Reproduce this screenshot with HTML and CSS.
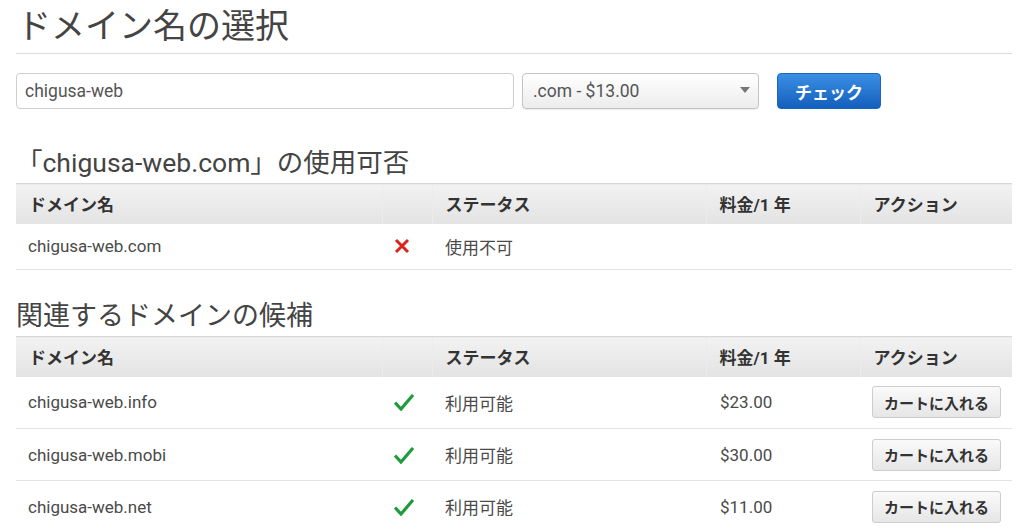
FILE: index.html
```html
<!DOCTYPE html>
<html lang="ja">
<head>
    <meta charset="UTF-8">
    <meta name="viewport" content="width=device-width, initial-scale=1.0">
    <title>ドメイン名の選択</title>
    <link rel="stylesheet" href="styles.css">
</head>
<body>
    <div class="page">
        <h1>ドメイン名の選択</h1>

        <div class="search-row">
            <input class="domain-input" type="text" value="chigusa-web">
            <div class="select-wrap">
                <select class="tld-select">
                    <option>.com - $13.00</option>
                    <option>.net - $11.00</option>
                    <option>.info - $23.00</option>
                </select>
            </div>
            <button class="btn-check">チェック</button>
        </div>

        <h2>「chigusa-web.com」の使用可否</h2>
        <table class="domain-table">
            <thead>
                <tr>
                    <th class="col-name">ドメイン名</th>
                    <th class="col-icon"></th>
                    <th class="col-status">ステータス</th>
                    <th class="col-price">料金/1 年</th>
                    <th class="col-action">アクション</th>
                </tr>
            </thead>
            <tbody>
                <tr class="row-short">
                    <td>chigusa-web.com</td>
                    <td class="icon-cell">
                        <svg width="16" height="16" viewBox="0 0 16 16"><path d="M2 2 L14 14 M14 2 L2 14" stroke="#d9231b" stroke-width="3" stroke-linecap="butt"/></svg>
                    </td>
                    <td>使用不可</td>
                    <td></td>
                    <td></td>
                </tr>
            </tbody>
        </table>

        <h2 class="second">関連するドメインの候補</h2>
        <table class="domain-table">
            <thead>
                <tr>
                    <th class="col-name">ドメイン名</th>
                    <th class="col-icon"></th>
                    <th class="col-status">ステータス</th>
                    <th class="col-price">料金/1 年</th>
                    <th class="col-action">アクション</th>
                </tr>
            </thead>
            <tbody>
                <tr>
                    <td>chigusa-web.info</td>
                    <td class="icon-cell">
                        <svg width="20" height="18" viewBox="0 0 20 18"><path d="M1 9.5 L7 16 L19 2" fill="none" stroke="#1f9a3c" stroke-width="3.2" stroke-linejoin="miter"/></svg>
                    </td>
                    <td>利用可能</td>
                    <td class="price">$23.00</td>
                    <td><button class="btn-cart">カートに入れる</button></td>
                </tr>
                <tr>
                    <td>chigusa-web.mobi</td>
                    <td class="icon-cell">
                        <svg width="20" height="18" viewBox="0 0 20 18"><path d="M1 9.5 L7 16 L19 2" fill="none" stroke="#1f9a3c" stroke-width="3.2" stroke-linejoin="miter"/></svg>
                    </td>
                    <td>利用可能</td>
                    <td class="price">$30.00</td>
                    <td><button class="btn-cart">カートに入れる</button></td>
                </tr>
                <tr>
                    <td>chigusa-web.net</td>
                    <td class="icon-cell">
                        <svg width="20" height="18" viewBox="0 0 20 18"><path d="M1 9.5 L7 16 L19 2" fill="none" stroke="#1f9a3c" stroke-width="3.2" stroke-linejoin="miter"/></svg>
                    </td>
                    <td>利用可能</td>
                    <td class="price">$11.00</td>
                    <td><button class="btn-cart">カートに入れる</button></td>
                </tr>
            </tbody>
        </table>
    </div>
</body>
</html>
```

FILE: styles.css
```css
body {
    margin: 0;
    font-family: Roboto, "Noto Sans CJK JP", sans-serif;
    color: #444;
    background: #fff;
}

.page {
    padding: 0 12px 0 16px;
}

h1 {
    margin: 0;
    padding: 5px 0 6px 1px;
    font-size: 34px;
    line-height: 42px;
    font-weight: 400;
    color: #444;
    border-bottom: 1px solid #dcdcdc;
}

.search-row {
    display: flex;
    align-items: center;
    margin-top: 19px;
}

.domain-input {
    box-sizing: border-box;
    width: 498px;
    height: 36px;
    padding: 0 8px;
    border: 1px solid #cfcfcf;
    border-radius: 4px;
    font-family: inherit;
    font-size: 17.5px;
    color: #555;
}

.select-wrap {
    position: relative;
    margin-left: 8px;
}

.select-wrap::after {
    content: "";
    position: absolute;
    right: 9px;
    top: 14px;
    border-left: 5px solid transparent;
    border-right: 5px solid transparent;
    border-top: 6px solid #777;
}

.tld-select {
    -webkit-appearance: none;
    appearance: none;
    box-sizing: border-box;
    width: 237px;
    height: 36px;
    padding: 0 10px;
    border: 1px solid #c4c4c4;
    border-radius: 4px;
    background: linear-gradient(#ffffff, #ececec);
    box-shadow: 0 1px 1px rgba(0, 0, 0, 0.08);
    font-family: inherit;
    font-size: 17.5px;
    color: #555;
}

.btn-check {
    margin-left: 18px;
    width: 104px;
    height: 36px;
    border: 1px solid #1a65bd;
    border-radius: 4px;
    background: linear-gradient(#3b8fe4, #135fbd);
    color: #fff;
    font-family: inherit;
    font-size: 17px;
    font-weight: bold;
    cursor: pointer;
}

h2 {
    margin: 36px 0 2px;
    font-size: 26.5px;
    line-height: 36px;
    font-weight: 400;
    color: #444;
}

h2.second {
    margin-top: 28px;
    font-size: 27px;
}

.domain-table {
    width: 996px;
    border-collapse: collapse;
    table-layout: fixed;
}

.domain-table th,
.domain-table td {
    box-sizing: border-box;
}

.domain-table th {
    height: 40px;
    padding: 0 0 0 13px;
    text-align: left;
    font-size: 17px;
    font-weight: bold;
    color: #333;
    background: linear-gradient(#f2f2f2, #e3e3e3);
    border-top: 1px solid #d8d8d8;
    border-left: 1px solid #ececec;
}

.domain-table th:first-child {
    border-left: none;
}

.col-name { width: 366px; }
.col-icon { width: 50px; }
.col-status { width: 274px; }
.col-price { width: 154px; }
.col-action { width: 152px; }

.domain-table td {
    height: 52px;
    padding: 0 0 0 12px;
    font-size: 17px;
    color: #4a4a4a;
    border-bottom: 1px solid #e3e3e3;
}

.domain-table .row-short td {
    height: 46px;
}

.domain-table td:nth-child(3) {
    padding-left: 13px;
}

.domain-table td.icon-cell {
    padding-left: 12px;
    line-height: 0;
}

.domain-table td.price {
    padding-left: 14px;
}

.btn-cart {
    height: 32px;
    padding: 0 11px;
    border: 1px solid #cdcdcd;
    border-radius: 3px;
    background: linear-gradient(#fafafa, #e6e6e6);
    color: #333;
    font-family: inherit;
    font-size: 15px;
    font-weight: bold;
    cursor: pointer;
}
```
